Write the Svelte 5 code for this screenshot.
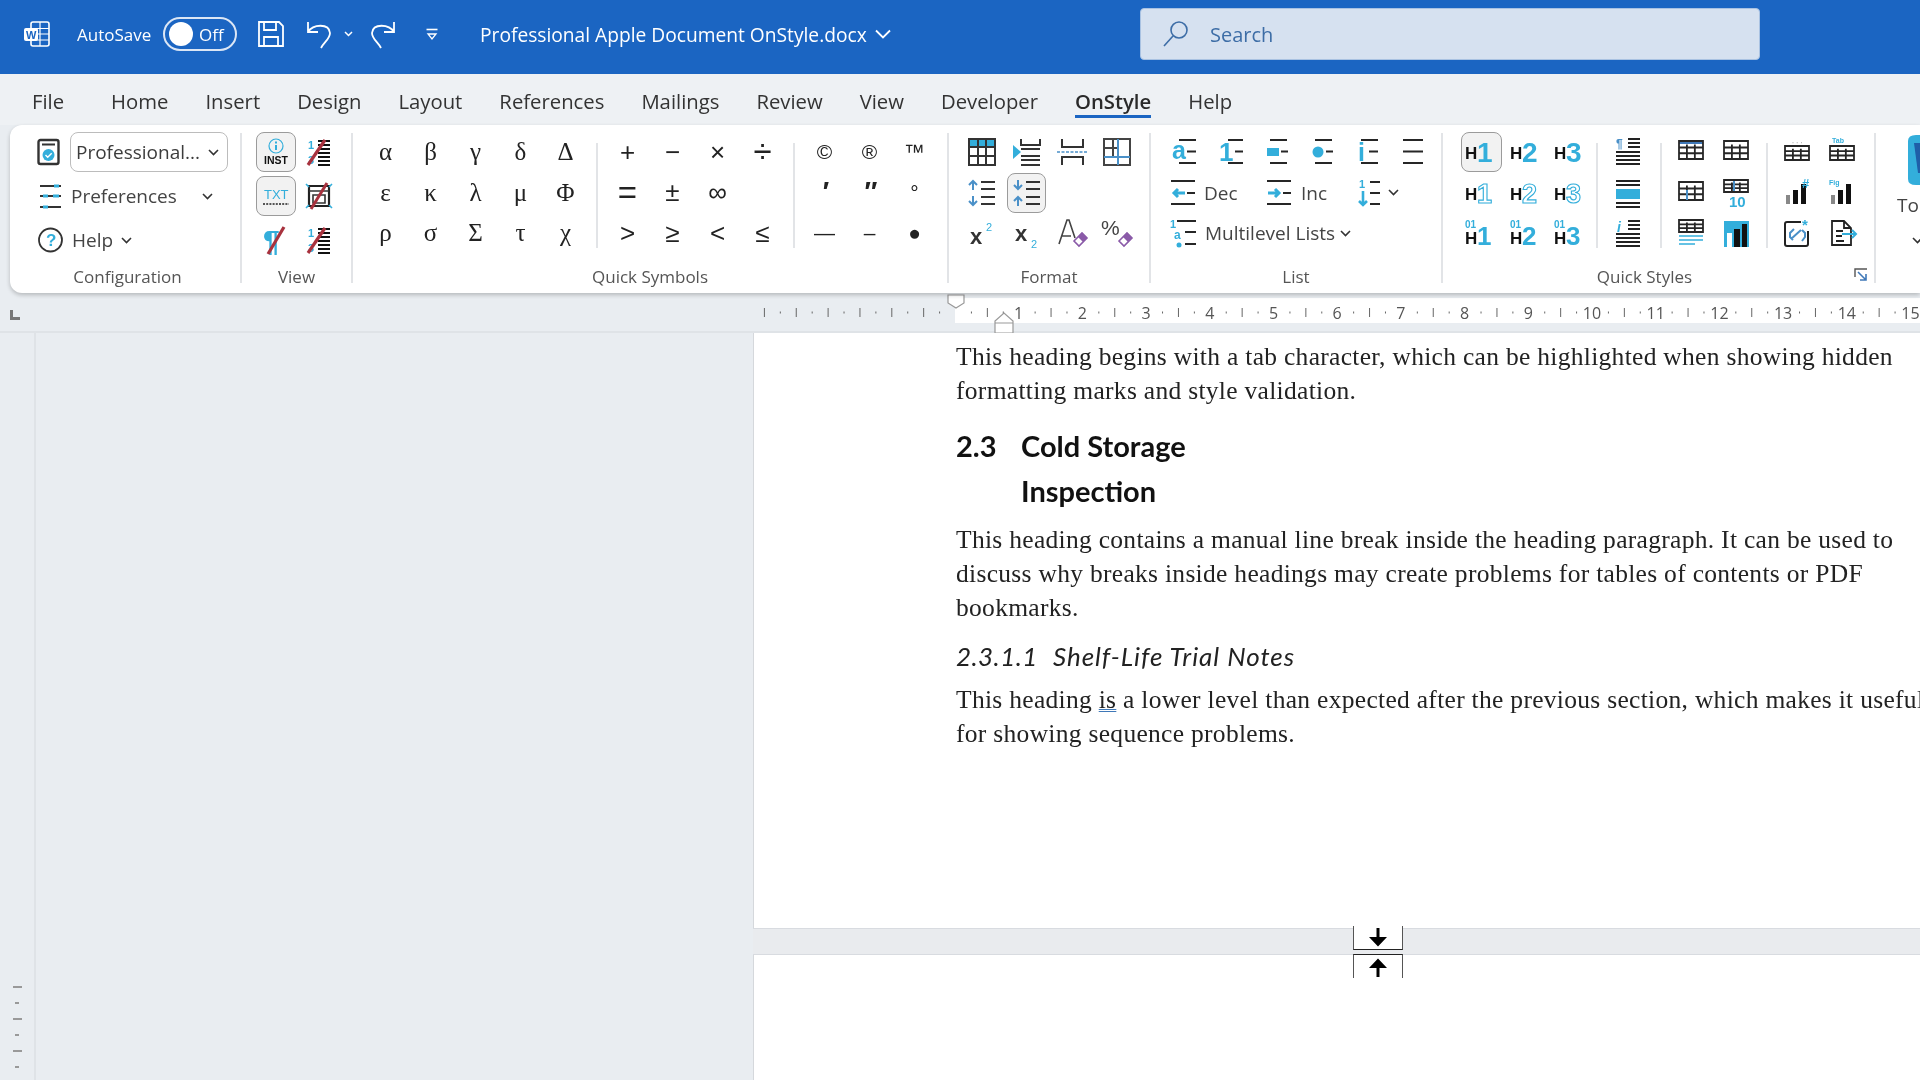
<script>
const K = '#262626', B = '#33aedb', R = '#a8323e', P = '#8a5aa8', D = '#4a90c8';
const l = (d, c = K, w = 2) => `<path d="${d}" fill="none" stroke="${c}" stroke-width="${w}"/>`;
const f = (d, c = B) => `<path d="${d}" fill="${c}"/>`;
const t = (x, y, s, txt, c = B, w = 700, extra = '') =>
  `<text x="${x}" y="${y}" font-size="${s}" fill="${c}" font-weight="${w}" font-family="'Liberation Sans',sans-serif" ${extra}>${txt}</text>`;
const slash = l('M5 29L22 4', R, 3.2);
const tbl = (x, y, w, h, head = false) =>
  (head ? f(`M${x} ${y}h${w}v3h-${w}z`, '#3f78b8') : '') +
  l(`M${x} ${y}h${w}v${h}h-${w}zM${x} ${y + h * 0.36}h${w}M${x} ${y + h * 0.68}h${w}M${x + w * 0.33} ${y + h * 0.2}v${h * 0.8}M${x + w * 0.66} ${y + h * 0.2}v${h * 0.8}`, K, 1.8);
const eraser = `<path d="M18 24l8-8 5 5-8 8z" fill="#fff" stroke="${P}" stroke-width="1.6"/>` + f('M22 20l4-4 5 5-4 4z', P);
const hd = (n) => t(0, 23, 17, 'H', '#111', 800) + t(12, 26, 28, n, B, 800);
const ho = (n) => t(0, 23, 17, 'H', '#111', 800) + t(12, 26, 27, n, '#fff', 800, `stroke="${B}" stroke-width="1.1"`);
const h0 = (n) => t(0, 27, 17, 'H', '#111', 800) + t(12, 28, 26, n, B, 800) + t(0, 11, 10, '01', B, 700);
const bars = (c = '#111') => f('M5 18h4v9H5z', '#888') + f('M12 13h5v14h-5z', c) + f('M20 7h5v20h-5z', c);

const icons = {
  inst: `<circle cx="16" cy="10" r="7" fill="none" stroke="${B}" stroke-width="1.2"/>` + f('M15 9h2v5h-2zM15 5.5h2v2h-2z') + t(4, 28, 10.5, 'INST', '#111', 800),
  numoff: t(5, 13, 11, '1', B) + t(5, 28, 11, '3', B) + l('M15 5h12M15 9h12M15 13h12M15 17h12M15 21h12M15 25h12M15 29h12', '#111', 1.8) + slash,
  txt: t(4, 19, 13, 'TXT', B, 400) + l('M3 24h26', '#222', 1.5).replace('/>', ' stroke-dasharray="2 1.2"/>'),
  frameoff: l('M6 6h20v20H6z', '#222', 2.2) + l('M6 11h20M10 15h12v8H10z', '#333', 1.6) + l('M3 4l3 3M29 4l-3 3M3 28l3-3M29 28l-3-3', B, 1.6) + l('M8 29L24 3', R, 3),
  pilcrowoff: t(3, 27, 30, '¶', B, 800) + l('M8 30L24 3', R, 3.2),
  t1: f('M3 3h26v8H3z') + l('M3 3h26v26H3zM3 11h26M3 20h26M12 3v26M20 3v26', '#333', 2),
  t2: l('M10 3v6h19V3M10 13h19M10 20h19M10 24h19M10 29h19', '#333', 2) + f('M2 9l8 7-8 7z'),
  t3: l('M6 3v8h21V3M6 29v-8h21v8', '#333', 2) + l('M1 16h30', D, 1.6).replace('/>', ' stroke-dasharray="3 1.5"/>'),
  t4: l('M3 3h26v26H3zM3 12h14M12 3v18', '#444', 2) + l('M17 3v26M3 21h26', D, 2),
  spinc: l('M15 5h14M15 12h14M15 20h14M15 27h14', '#333', 2) + l('M7 13V4M3 8l4-4 4 4M7 19v9M3 24l4 4 4-4', D, 2),
  spdec: l('M15 5h14M15 12h14M15 20h14M15 27h14', '#333', 2) + l('M7 3v9M3 8l4 4 4-4M7 29v-9M3 24l4-4 4 4', D, 2),
  sup: t(4, 27, 22, 'x', '#333', 800) + t(20, 14, 11, '2', B, 400),
  sub: t(4, 24, 22, 'x', '#333', 800) + t(20, 31, 11, '2', B, 400),
  aer: l('M3 27L11 3h2l6 18M6 19h9', '#444', 1.6) + eraser,
  per: t(0, 18, 21, '%', '#444', 400) + eraser,
  la: t(1, 23, 25, 'a', B, 800) + l('M8 4h17M16 15.5h9M8 27h17'),
  l1: t(3, 25, 26, '1', B, 800) + l('M12 4h15M19 15.5h8M12 27h15'),
  lrect: f('M5 12h12v8H5z') + l('M8 4h17M19 15.5h7M8 27h17'),
  ldot: `<circle cx="11" cy="16" r="5.5" fill="${B}"/>` + l('M8 4h17M19 15.5h7M8 27h17'),
  li: t(5, 25, 25, 'i', B, 800) + l('M8 4h17M16 15.5h9M8 27h17'),
  lplain: l('M5 4h20M5 15.5h20M5 27h20'),
  dec: l('M3 4h24M19 16h8M3 27h24') + l('M17 16H6M10 12l-4 4 4 4', B, 3),
  inc: l('M3 4h24M19 16h8M3 27h24') + l('M4 16h11M11 12l4 4-4 4', B, 3),
  lnum: t(8, 11, 11, '1', B, 700) + l('M12 14v14M8 24l4 4 4-4', B, 2.6) + l('M19 5h10M19 16h10M19 27h10'),
  multi: t(2, 11, 11, '1', B, 800) + t(6, 22, 12, 'a', B, 800) + `<circle cx="11" cy="28" r="2.5" fill="${B}"/>` + l('M9 4h19M17 15h11M17 27h11'),
  h1: hd('1'), h2: hd('2'), h3: hd('3'),
  o1: ho('1'), o2: ho('2'), o3: ho('3'),
  z1: h0('1'), z2: h0('2'), z3: h0('3'),
  sa: t(5, 12, 12, '¶', D, 700) + l('M17 3h12M17 7h12M17 11h12M5 16h24M5 20h24M5 24h24M5 28h24', '#222', 1.8),
  sb: l('M5 4h24M5 8h24M5 26h24M5 30h24', '#222', 1.8) + f('M5 12h24v10H5z'),
  sc: t(6, 15, 14, 'i', B, 700, 'font-style="italic"') + l('M17 4h12M17 8h12M17 12h12M5 17h24M5 21h24M5 25h24M5 29h24', '#222', 1.8),
  tb1: tbl(4, 5, 24, 18, true),
  tb2: tbl(4, 5, 24, 18) ,
  tb3: tbl(4, 5, 24, 18) + l('M12 13v10', D, 2),
  tb4: tbl(4, 3, 24, 12) + t(9, 30, 15, '10', B, 800) + l('M14 4v10', D, 2),
  tb5: tbl(4, 3, 24, 12) + l('M4 19h24M4 23h24M4 27h16', B, 1.5),
  chartb: f('M4 4h25v26H4z') + f('M7 16h5v14H7z', '#fff') + f('M14 12h6v18h-6z', '#111') + f('M22 7h5v23h-5z', '#111'),
  tb6: tbl(4, 10, 24, 14) + t(11, 9, 7, '· · ·', '#bbb', 700),
  tb7: tbl(4, 10, 24, 14) + t(6, 7, 7, 'Tab', B, 700),
  c1: bars() + t(21, 11, 13, '#', B, 800),
  c2: bars() + t(3, 8, 7, 'Fig', B, 700),
  doc1: l('M4 7q0-2 2-2h14M27 14v13q0 2-2 2H6q-2 0-2-2V7', '#222', 2) + l('M10 22l10-9M13 12l-4 4v4l3 3M21 24l3-4v-4l-3-3', D, 2) + t(21, 13, 15, '*', B, 800),
  doc2: l('M6 4h12l7 7v17H6zM18 4v7h7M10 14h7M10 19h6M10 24h8', '#222', 1.8) + l('M16 17h14M26 13l4 4-4 4', B, 2),
};
const chev = l('M1 1l4.5 4.5L10 1', '#333', 1.6);

const greek = ['α','β','γ','δ','Δ','ε','κ','λ','μ','Φ','ρ','σ','Σ','τ','χ'];
const ops = ['+','−','×','÷','=','±','∞','','>','≥','<','≤'];
const marks = ['©','®','™','′','″','°','—','–','●'];
const fmt = ['t1','t2','t3','t4','spinc','spdec','','','sup','sub','aer','per'];
const listTop = ['la','l1','lrect','ldot','li','lplain'];
const heads = ['h1','h2','h3','o1','o2','o3','z1','z2','z3'];
const col1 = ['sa','sb','sc'];
const tables = ['tb1','tb2','tb3','tb4','tb5','chartb'];
const extras = ['tb6','tb7','c1','c2','doc1','doc2'];
const tabs = [['File',false],['Home',false],['Insert',false],['Design',false],['Layout',false],['References',false],['Mailings',false],['Review',false],['View',false],['Developer',false],['OnStyle',true],['Help',false]];

const U = 63.7, X0 = 955;
const ticks = [];
for (let q = -12; q <= 64; q++) {
  if (q < 0) ticks.push({ x: X0 + q * U / 4, tall: q % 2 === 0 });
  else if (q > 0 && q % 4 !== 0) ticks.push({ x: X0 + q * U / 4, tall: q % 2 === 0 });
}
const nums = Array.from({ length: 15 }, (_, i) => i + 1);
</script>

{#snippet ic(name, size = 32)}
  <svg class="ic" width={size} height={size} viewBox="0 0 32 32">{@html icons[name]}</svg>
{/snippet}
{#snippet chevron()}
  <svg class="chev" width="11" height="7" viewBox="0 0 11 7">{@html chev}</svg>
{/snippet}

<div class="app">
  <header class="title">
    <svg class="word" width="28" height="28" viewBox="0 0 28 28" fill="none" stroke="#fff" stroke-width="1.6">
      <path d="M8 4q0-2 2-2h14q2 0 2 2v20q0 2-2 2H10q-2 0-2-2z" />
      <path d="M8 8.5h18M8 14h18M8 20h18M17 2v24" stroke-width="1.2" />
      <rect x="1" y="8" width="14" height="13" rx="2" fill="#fff" stroke="none" />
      <text x="3" y="18.5" font-size="11" font-weight="700" fill="#1b65c2" stroke="none" font-family="'Liberation Sans',sans-serif">W</text>
    </svg>
    <span class="autosave">AutoSave</span>
    <span class="toggle"><i></i><b>Off</b></span>
    <svg class="save" width="28" height="28" viewBox="0 0 28 28" fill="none" stroke="#fff" stroke-width="1.8">
      <path d="M2 2h20l4 4v20H2zM7 2v8h12V2M7 26v-9h14v9" />
    </svg>
    <svg class="undo" width="28" height="30" viewBox="0 0 28 30" fill="none" stroke="#fff" stroke-width="1.8">
      <path d="M3 3v10h10M3 13C8 5 24 4 25 14c0 6-6 9-9 15" />
    </svg>
    <svg class="small-chev" width="9" height="6" viewBox="0 0 9 6" fill="none" stroke="#fff" stroke-width="1.5"><path d="M1 1l3.5 3.5L8 1"/></svg>
    <svg class="redo" width="28" height="30" viewBox="0 0 28 30" fill="none" stroke="#fff" stroke-width="1.8">
      <path d="M25 3v10H15M25 13C20 5 4 4 3 14c0 6 6 9 9 15" />
    </svg>
    <svg class="custom" width="14" height="14" viewBox="0 0 14 14" fill="#fff" stroke="#fff"><path d="M1.5 2.5h11" stroke-width="1.6"/><path d="M3 7h8l-4 5z" fill="none" stroke-width="1.3"/></svg>
    <span class="docname">Professional Apple Document OnStyle.docx</span>
    <svg class="doc-chev" width="16" height="10" viewBox="0 0 16 10" fill="none" stroke="#fff" stroke-width="1.8"><path d="M1 1.5l7 7 7-7"/></svg>
    <div class="search">
      <svg width="28" height="28" viewBox="0 0 28 28" fill="none" stroke="#3d6da6" stroke-width="1.6"><circle cx="17" cy="10" r="8"/><path d="M11 16L2 26"/></svg>
      <span>Search</span>
    </div>
  </header>

  <nav class="tabs">
    {#each tabs as [name, on]}
      <span class="tab" class:on>{name}</span>
    {/each}
  </nav>

  <section class="ribbon">
    <div class="group config">
      <div class="body rows44">
        <div class="row">
          <svg class="ic" width="32" height="32" viewBox="0 0 32 32" fill="none">
            <rect x="6.5" y="4" width="20" height="24" rx="2" stroke="#333" stroke-width="2.4" fill="#fff"/>
            <path d="M10 8.5h13" stroke="#333" stroke-width="1.8"/>
            <circle cx="16.5" cy="19" r="6" fill={B}/><path d="M13.5 19l2.2 2.2 4-4" stroke="#fff" stroke-width="1.4"/>
          </svg>
          <div class="select"><span>Professional...</span>{@render chevron()}</div>
        </div>
        <div class="row">
          <svg class="ic" width="32" height="32" viewBox="0 0 32 32" fill="none">
            <path d="M8 6h21M8 16h21M8 27h21" stroke="#333" stroke-width="1.8"/>
            <path d="M22 6h5M11 16h5M11 27h5M21 16h6" stroke={B} stroke-width="3"/>
          </svg>
          <span class="lbl pref">Preferences</span>{@render chevron()}
        </div>
        <div class="row">
          <svg class="ic" width="32" height="32" viewBox="0 0 32 32" fill="none">
            <circle cx="18.5" cy="16" r="11.5" stroke="#333" stroke-width="1.8"/>
            <text x="14" y="22" font-size="17" font-weight="700" fill={B} font-family="'Liberation Sans',sans-serif">?</text>
          </svg>
          <span class="lbl help">Help</span>{@render chevron()}
        </div>
      </div>
      <div class="glabel">Configuration</div>
    </div>

    <div class="group view">
      <div class="body rows44 grid2">
        <span class="cell sel">{@render ic('inst')}</span><span class="cell">{@render ic('numoff')}</span>
        <span class="cell sel">{@render ic('txt')}</span><span class="cell">{@render ic('frameoff')}</span>
        <span class="cell">{@render ic('pilcrowoff')}</span><span class="cell">{@render ic('numoff')}</span>
      </div>
      <div class="glabel">View</div>
    </div>

    <div class="group symbols">
      <div class="body rows">
        <div class="g g5 sym">{#each greek as s}<span class="cell">{s}</span>{/each}</div>
        <div class="sep"></div>
        <div class="g g4 op">{#each ops as s}<span class="cell" class:big={s === '÷' || s === '='}>{s}</span>{/each}</div>
        <div class="sep"></div>
        <div class="g g3 mk">{#each marks as s}<span class="cell" class:prime={s === '′' || s === '″'}>{s}</span>{/each}</div>
      </div>
      <div class="glabel">Quick Symbols</div>
    </div>

    <div class="group format">
      <div class="body rows">
        <div class="g g4">
          {#each fmt as n, i}
            <span class="cell" class:sel={i === 5}>{#if n}{@render ic(n)}{/if}</span>
          {/each}
        </div>
      </div>
      <div class="glabel">Format</div>
    </div>

    <div class="group list">
      <div class="body listbody">
        <div class="g g6">{#each listTop as n}<span class="cell">{@render ic(n)}</span>{/each}</div>
        <div class="lrow">
          {@render ic('dec')}<span class="lbl dec">Dec</span>
          {@render ic('inc')}<span class="lbl inc">Inc</span>
          {@render ic('lnum')}{@render chevron()}
        </div>
        <div class="lrow">
          {@render ic('multi')}<span class="lbl multi">Multilevel Lists</span>{@render chevron()}
        </div>
      </div>
      <div class="glabel">List</div>
    </div>

    <div class="group styles">
      <div class="body rows">
        <div class="g g3h">
          {#each heads as n, i}<span class="cell" class:sel={i === 0}>{@render ic(n)}</span>{/each}
        </div>
        <div class="sep first"></div>
        <div class="g g1">{#each col1 as n}<span class="cell">{@render ic(n)}</span>{/each}</div>
        <div class="sep second"></div>
        <div class="g g2">{#each tables as n}<span class="cell">{@render ic(n)}</span>{/each}</div>
        <div class="sep"></div>
        <div class="g g2">{#each extras as n}<span class="cell">{@render ic(n)}</span>{/each}</div>
      </div>
      <div class="glabel">Quick Styles</div>
      <svg class="launcher" width="14" height="14" viewBox="0 0 14 14" fill="none">
        <path d="M1 9V1h12" stroke="#555" stroke-width="1.4"/><path d="M4 4l8 8M12 6v6H6" stroke="#3f78b8" stroke-width="1.6"/>
      </svg>
    </div>

    <div class="tools">
      <svg width="40" height="54" viewBox="0 0 40 54" fill="none">
        <path d="M4 8q0-6 8-6h20v50H12q-8 0-8-6z" fill={B}/>
        <path d="M10 10h22v30H14z" fill="#1f5fa8"/>
      </svg>
      <span class="lbl">Tools</span>
      <span class="tools-chev">{@render chevron()}</span>
    </div>
  </section>

  <div class="ruler">
    <svg class="corner" width="12" height="12" viewBox="0 0 12 12"><path d="M1 1h3v7h7v3H1z" fill="#777"/></svg>
    <svg class="rsvg" width="1920" height="40" viewBox="0 0 1920 40">
      <rect x="955" y="5" width="965" height="25" fill="#fff"/>
      {#each ticks as k}
        <rect x={k.x} y={k.tall ? 15 : 18.5} width="1" height={k.tall ? 9 : 2} fill="#666"/>
      {/each}
      {#each nums as n}
        <text x={X0 + n * U} y="26" text-anchor="middle" font-size="16" fill="#555" font-family="'Open Sans',sans-serif">{n}</text>
      {/each}
      <path d="M948 2h16v8l-8 5-8-5z" fill="#fff" stroke="#999" stroke-width="1.2"/>
      <path d="M995 40V28l9-8 9 8v12zM995 30h18" fill="#fff" stroke="#999" stroke-width="1.2"/>
    </svg>
  </div>

  <div class="work">
    <aside class="vruler">
      <span class="long"></span><span></span><span class="long"></span><span></span><span class="long"></span><span></span>
    </aside>
    <main class="canvas">
      <article class="page one">
        <p>This heading begins with a tab character, which can be highlighted when showing hidden<br />formatting marks and style validation.</p>
        <h2><span class="num">2.3</span><span>Cold Storage<br />Inspection</span></h2>
        <p class="after-h2">This heading contains a manual line break inside the heading paragraph. It can be used to<br />discuss why breaks inside headings may create problems for tables of contents or PDF<br />bookmarks.</p>
        <h4><span class="num4">2.3.1.1</span><span class="h4t">Shelf-Life Trial Notes</span></h4>
        <p class="after-h4">This heading <u>is</u> a lower level than expected after the previous section, which makes it useful<br />for showing sequence problems.</p>
      </article>
      <div class="gap"></div>
      <article class="page two"></article>
      <div class="breaker">
        <div class="half top"><svg width="24" height="20" viewBox="0 0 24 20"><path d="M10.5 0h3v9h7.5L12 18.5 3 9h7.5z" fill="#000"/></svg></div>
        <div class="half bot"><svg width="24" height="20" viewBox="0 0 24 20"><path d="M10.5 20h3v-9h7.5L12 1.5 3 11h7.5z" fill="#000"/></svg></div>
      </div>
    </main>
  </div>
</div>

<style>
  :global(body) { margin: 0; background: #e9ecf0; }
  .app { width: 1920px; height: 1080px; overflow: hidden; display: flex; flex-direction: column; font-family: "Open Sans", "Liberation Sans", sans-serif; color: #3c3c3c; background: #e9edf1; filter: blur(.3px); }
  .ic { display: block; flex: none; overflow: visible; }

  .title { height: 74px; flex: none; background: #1b65c2; color: #fff; display: flex; align-items: center; padding: 0 0 6px 23px; box-sizing: border-box; }
  .word { margin-right: 26px; }
  .autosave { font-size: 17px; width: 86px; }
  .toggle { width: 74px; height: 34px; box-sizing: border-box; border: 2px solid #dbe6f5; border-radius: 17px; display: flex; align-items: center; padding-left: 4px; gap: 6px; }
  .toggle i { width: 24px; height: 24px; border-radius: 50%; background: #fff; }
  .toggle b { font-weight: 400; font-size: 17px; }
  .save { margin-left: 20px; }
  .undo { margin-left: 20px; }
  .small-chev { margin-left: 11px; }
  .redo { margin-left: 16px; }
  .custom { margin-left: 28px; }
  .docname { margin-left: 41px; font-size: 19.2px; white-space: nowrap; width: 392px; }
  .doc-chev { margin-left: 3px; }
  .search { position: absolute; left: 1140px; top: 8px; width: 620px; height: 52px; box-sizing: border-box; border-radius: 4px; background: #d6e1f0; border: 1px solid #a9c2e2; display: flex; align-items: center; padding-left: 21px; gap: 20px; color: #3d6da6; font-size: 20px; }

  .tabs { height: 51px; flex: none; display: flex; align-items: center; padding: 2px 0 0 32px; gap: 37px; background: #eef1f4; box-sizing: border-box; font-size: 20.3px; color: #333; white-space: nowrap; }
  .tab { position: relative; }
  .tab:first-child { margin-right: 10px; }
  .tab.on { font-weight: 600; color: #2a2a2a; }
  .tab.on::after { content: ""; position: absolute; left: 0; right: 0; bottom: -3px; height: 3px; background: #1b65c2; }

  .ribbon { height: 168px; flex: none; margin-left: 10px; padding: 8px 0 10px; box-sizing: border-box; background: #fff; border-radius: 12px 0 0 12px; box-shadow: 0 2px 4px rgba(0,0,0,.22); display: flex; position: relative; z-index: 2; overflow: hidden; }
  .group { height: 150px; box-sizing: border-box; border-right: 2px solid #e2e4e7; flex: none; position: relative; }
  .config { width: 232px; }
  .view { width: 111px; }
  .symbols { width: 596px; }
  .format { width: 202px; }
  .list { width: 292px; }
  .styles { width: 433px; }
  .body { height: 132px; margin-top: -1px; }
  .glabel { height: 24px; line-height: 26px; text-align: center; font-size: 17px; color: #555; white-space: nowrap; }
  .config .glabel { padding-left: 5px; }
  .styles .glabel { padding-right: 28px; }

  .rows44 { height: 132px; margin-top: -3px; margin-bottom: 2px; }
  .row { height: 44px; display: flex; align-items: center; padding-left: 22px; }
  .select { width: 158px; height: 40px; box-sizing: border-box; margin-left: 6px; border: 1.5px solid #bcbcbc; border-radius: 8px; display: flex; align-items: center; justify-content: space-between; padding: 0 8px 0 5px; font-size: 19px; }
  .lbl { font-size: 19px; white-space: nowrap; color: #444; }
  .pref { margin-left: 7px; width: 131px; }
  .help { margin-left: 8px; width: 49px; }
  .grid2 { display: grid; grid-template-columns: 42px 44px; grid-auto-rows: 44px; padding-left: 13px; }

  .cell { display: flex; align-items: center; justify-content: center; box-sizing: border-box; min-width: 0; }
  .sel { background: #f2f2f2; border: 1.5px solid #9b9b9b; border-radius: 8px; margin: 2px 1px; }
  .rows { display: flex; align-items: flex-start; }
  .g { display: grid; grid-auto-rows: 40.5px; flex: none; }
  .g5 { grid-template-columns: repeat(5, 45px); }
  .g4 { grid-template-columns: repeat(4, 45px); }
  .g3 { grid-template-columns: repeat(3, 45px); }
  .g6 { grid-template-columns: repeat(6, 45.5px); }
  .g3h { grid-template-columns: repeat(3, 44.5px); }
  .g1 { grid-template-columns: 45px; }
  .g2 { grid-template-columns: repeat(2, 45px); }
  .sep { width: 2px; height: 105px; margin: 11px 8px 0 8px; background: #e2e4e7; flex: none; }
  .symbols .rows { padding-left: 10px; }
  .symbols .sep { margin-left: 8px; margin-right: 7px; }
  .sym .cell { font-family: "Liberation Serif", serif; font-size: 25px; color: #222; }
  .op .cell { font-family: "Liberation Sans", sans-serif; font-size: 26px; color: #222; }
  .op .big { font-size: 33px; }
  .mk .cell { font-family: "Liberation Sans", sans-serif; font-size: 21px; color: #222; }
  .mk .prime { font-weight: 700; font-style: italic; font-size: 27px; }
  .format .rows { padding-left: 10px; }
  .styles .rows { padding-left: 16px; }
  .styles .sep { margin-left: 7.5px; margin-right: 6.5px; }
  .styles .sep.first { margin-left: 3.5px; }
  .styles .sep.second { margin-left: 10.5px; margin-right: 6.5px; }
  .format .sel { margin: 0 3px; height: 40px; }
  .styles .sel { margin: 0 2px; height: 40px; }

  .listbody { padding-left: 13px; }
  .lrow { height: 40.5px; display: flex; align-items: center; padding-left: 4px; }
  .dec { margin: 0 0 0 4px; width: 60px; }
  .inc { margin: 0 0 0 5px; width: 50px; }
  .lrow > .chev { margin-left: 5px; }
  .multi { margin-left: 5px; }
  .launcher { position: absolute; right: 6px; bottom: 1px; }

  .tools { margin-left: 21px; display: flex; flex-direction: column; align-items: flex-start; }
  .tools svg { margin-left: 7px; }
  .tools .lbl { margin-top: 5px; }
  .tools-chev { display: block; margin-top: 9px; margin-left: 8px; }

  .ruler { height: 40px; flex: none; position: relative; border-bottom: 2px solid #dfe3e7; box-sizing: border-box; }
  .rsvg { display: block; }
  .corner { position: absolute; left: 9px; top: 16px; }

  .work { flex: 1; min-height: 0; display: flex; }
  .vruler { width: 36px; flex: none; box-sizing: border-box; border-right: 2px solid #dfe3e7; padding-top: 653px; display: flex; flex-direction: column; align-items: center; gap: 14px; }
  .vruler span { width: 4px; height: 2px; background: #999; }
  .vruler .long { width: 9px; }

  .canvas { flex: 1; min-width: 0; position: relative; padding-left: 717px; box-sizing: border-box; overflow: hidden; }
  .page { background: #fff; border-left: 1px solid #d5d8dc; box-sizing: border-box; padding-left: 202px; white-space: nowrap; font-family: "Liberation Serif", serif; font-size: 25.5px; letter-spacing: .3px; line-height: 34px; color: #222; }
  .one { height: 595px; padding-top: 7px; }
  .two { height: 200px; }
  .gap { height: 27px; background: #e9ebee; border-top: 1px solid #d8dbe0; border-bottom: 1px solid #d8dbe0; box-sizing: border-box; }
  p { margin: 0; }
  h2 { margin: 15px 0 0; font: 700 29px/45px Lato, "Open Sans", sans-serif; letter-spacing: 0; display: flex; color: #111; }
  h2 .num { width: 65px; }
  .after-h2 { margin-top: 10px; }
  h4 { margin: 14px 0 0; font: italic 400 26px/34px Lato, "Open Sans", sans-serif; display: flex; color: #222; letter-spacing: .45px; }
  h4 .num4 { width: 97px; }
  .h4t { letter-spacing: .95px; }
  .after-h4 { margin-top: 9.5px; }
  u { text-decoration-color: #3f78b8; text-decoration-style: double; text-decoration-thickness: 1px; }

  .breaker { position: absolute; left: 1317px; top: 593px; width: 50px; }
  .half { height: 24px; box-sizing: border-box; background: #fff; border-left: 1.5px solid #555; border-right: 1.5px solid #555; display: flex; align-items: center; justify-content: center; }
  .half.top { border-bottom: 1.5px solid #222; }
  .half.bot { border-top: 1.5px solid #222; margin-top: 4px; }
</style>
